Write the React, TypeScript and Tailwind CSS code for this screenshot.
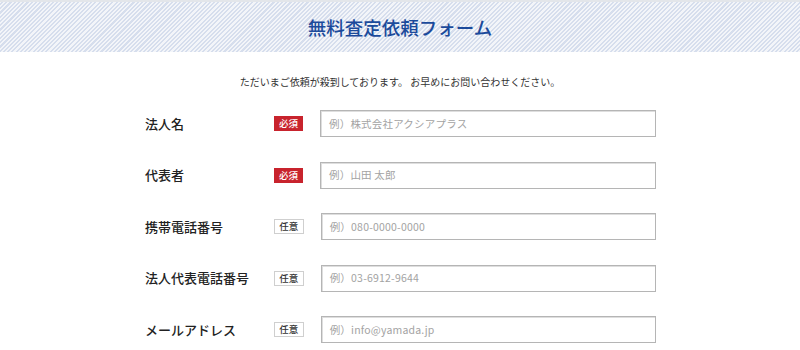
import React from "react";

const rows = [
  { label: "法人名", required: true, ph: "例）株式会社アクシアプラス" },
  { label: "代表者", required: true, ph: "例）山田 太郎" },
  { label: "携帯電話番号", required: false, ph: "例）080-0000-0000" },
  { label: "法人代表電話番号", required: false, ph: "例）03-6912-9644" },
  { label: "メールアドレス", required: false, ph: "例）info@yamada.jp" },
];

export default function App() {
  return (
    <div
      className="w-[800px] h-[350px] bg-white overflow-hidden"
      style={{ fontFamily: '"Noto Sans CJK JP", "Noto Sans", sans-serif' }}
    >
      <div className="h-[52px] border-t-2 border-[#e3e6ea] bg-[repeating-linear-gradient(-45deg,#f3f5f9_0px,#f3f5f9_1.5px,#d6deed_1.5px,#d6deed_3px)] flex items-center justify-center">
        <h1 className="text-[18.5px] leading-none font-medium text-[#1b4a9b]">
          無料査定依頼フォーム
        </h1>
      </div>
      <p className="mt-[24px] text-center text-[10px] leading-[12px] text-[#333]">
        ただいまご依頼が殺到しております。 お早めにお問い合わせください。
      </p>
      <div className="mt-[22px] w-[512px] mx-auto flex flex-col gap-[24.5px]">
        {rows.map((r) => (
          <div key={r.label} className="h-[27px] flex items-center">
            <div className="w-[130px] pl-px text-[13px] font-medium text-[#222]">
              {r.label}
            </div>
            {r.required ? (
              <div className="w-[29px] h-[15px] bg-[#c8232d] text-white text-[9.5px] leading-[15px] text-center font-medium">
                必須
              </div>
            ) : (
              <div className="w-[30px] h-[15px] border border-[#cfcfcf] bg-white text-[#333] text-[9.5px] leading-[13px] text-center font-medium">
                任意
              </div>
            )}
            <div className="ml-[17px] w-[336px] h-[27px] border border-[#b5b5b5] shadow-[inset_1px_1px_0_#dedede] bg-white flex items-center pl-[8px] text-[10.5px] tracking-[0.2px] text-[#a3a3a3]">
              {r.ph}
            </div>
          </div>
        ))}
      </div>
    </div>
  );
}
